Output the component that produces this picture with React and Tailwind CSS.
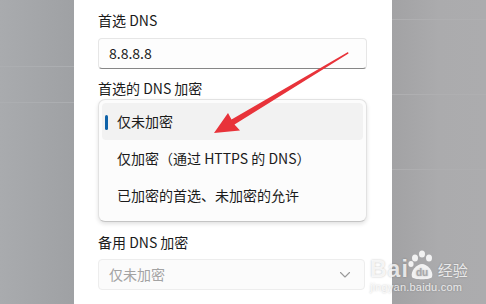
const font = { fontFamily: '"Segoe UI", "Noto Sans CJK SC", "Noto Sans", sans-serif' };

function ChevronDown() {
  return (
    <svg width="12" height="8" viewBox="0 0 12 8" fill="none">
      <path d="M1.5 1.5 L6 6 L10.5 1.5" stroke="#9a9a9a" strokeWidth="1.1" strokeLinecap="round" strokeLinejoin="round" />
    </svg>
  );
}

function Watermark() {
  return (
    <div className="absolute left-[370px] top-[249px] flex flex-col text-white/80 [text-shadow:0_0_2px_rgba(0,0,0,0.25)]">
      <div className="flex items-end h-[32px]">
        <span className="text-[23px] leading-none font-bold tracking-[1px] font-['Liberation_Sans',sans-serif]">Bai</span>
        <svg width="30" height="32" viewBox="0 0 30 32" className="-ml-[2px]">
          <g fill="rgba(255,255,255,0.85)">
            <ellipse cx="8" cy="9" rx="3" ry="3.6" />
            <ellipse cx="15" cy="5" rx="3" ry="3.6" />
            <ellipse cx="22" cy="9" rx="3" ry="3.6" />
            <ellipse cx="4" cy="15" rx="2.6" ry="3" />
            <path d="M5 28 C3 22 10 15 15 15 C20 15 27 22 25 28 C24 31 6 31 5 28 Z" />
          </g>
          <text x="15" y="27" textAnchor="middle" fontSize="10" fontWeight="bold" fill="#a8a8aa" fontFamily="Liberation Sans, sans-serif">du</text>
        </svg>
        <span className="text-[15px] leading-none mb-[4px] ml-[1px] font-['Noto_Sans_CJK_SC',sans-serif]">经验</span>
      </div>
      <span className="text-[11px] leading-[13px] font-['Liberation_Sans',sans-serif] tracking-[0.2px]">jingyan.baidu.com</span>
    </div>
  );
}

export default function App() {
  return (
    <div className="relative w-[486px] h-[304px] overflow-hidden flex" style={font}>
      {/* left dimmed backdrop */}
      <div className="w-[74px] h-full bg-gradient-to-r from-[#a9abae] to-[#9fa1a4] flex flex-col">
        <div className="h-[67px] border-b border-[#acaeb1]" />
        <div className="h-[36px] border-b border-[#acaeb1]" />
      </div>

      {/* dialog */}
      <div className="w-[318px] h-full bg-white pl-[24px] pr-[25px] pt-[10px] flex flex-col text-[14px] text-[#1b1b1b]">
        <div className="h-[20px] leading-[20px]">首选 DNS</div>
        <div className="mt-[8px] h-[31px] rounded-[4px] border border-[#e6e6e6] border-b-[#868686] bg-[#fdfdfd] flex items-center px-[10px]">
          8.8.8.8
        </div>
        <div className="mt-[9px] h-[20px] leading-[20px]">首选的 DNS 加密</div>
        <div className="mt-[1px] h-[123px] rounded-[7px] border border-[#e2e2e2] border-b-[#c4c4c4] bg-[#fcfcfc] shadow-[0_2px_4px_rgba(0,0,0,0.12)] px-[3px] pt-[3px] flex flex-col">
          <div className="relative h-[37px] rounded-[4px] bg-[#f2f2f2] flex items-center pl-[15px]">
            <span className="absolute left-[3px] top-[12px] w-[3px] h-[15px] rounded-full bg-[#0f62a8]" />
            仅未加密
          </div>
          <div className="h-[37px] flex items-center pl-[15px]">仅加密（通过 HTTPS 的 DNS）</div>
          <div className="h-[37px] flex items-center pl-[15px]">已加密的首选、未加密的允许</div>
        </div>
        <div className="mt-[10px] h-[20px] leading-[20px]">备用 DNS 加密</div>
        <div className="mt-[7px] h-[31px] w-[267px] rounded-[4px] border border-[#ededed] bg-[#fbfbfb] flex items-center justify-between pl-[10px] pr-[13px] text-[#a3a3a3]">
          <span>仅未加密</span>
          <ChevronDown />
        </div>
      </div>

      {/* right dimmed backdrop */}
      <div className="flex-1 h-full bg-gradient-to-r from-[#a2a2a4] via-[#ababad] to-[#acacae] flex flex-col">
        <div className="h-[20px] border-b border-[#afafb1]" />
        <div className="h-[75px] border-b border-[#afafb1]" />
        <div className="h-[75px] border-b border-[#aeaeb0]" />
      </div>

      {/* red annotation arrow */}
      <svg className="absolute left-0 top-0 pointer-events-none" width="486" height="304" viewBox="0 0 486 304">
        <polygon
          points="348,52 231.5,119.4 228,113 214,133 240,130.5 234.5,124.6 348.5,53.5"
          fill="#e8333a"
        />
      </svg>

      <Watermark />
    </div>
  );
}
